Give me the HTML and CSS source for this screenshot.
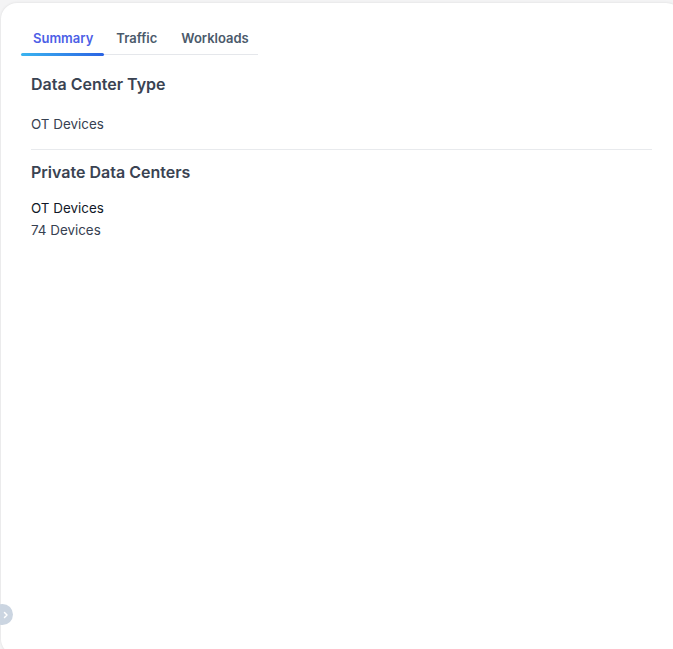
FILE: index.html
```html
<!DOCTYPE html>
<html lang="en">
<head>
<meta charset="utf-8">
<title>Summary</title>
<link rel="stylesheet" href="styles.css">
</head>
<body>
<div class="card">
  <nav class="tabs">
    <div class="tab active">Summary</div>
    <div class="tab">Traffic</div>
    <div class="tab">Workloads</div>
  </nav>
  <div class="content">
    <section class="section">
      <h2 class="title">Data Center Type</h2>
      <p class="value">OT Devices</p>
    </section>
    <hr class="divider">
    <section class="section">
      <h2 class="title">Private Data Centers</h2>
      <p class="label">OT Devices</p>
      <p class="value tight">74 Devices</p>
    </section>
  </div>
  <button class="expand" aria-label="Expand">
    <svg width="8" height="8" viewBox="0 0 8 8"><path d="M2.5 1.5 L5 4 L2.5 6.5" fill="none" stroke="#fff" stroke-width="1.5" stroke-linecap="round" stroke-linejoin="round"/></svg>
  </button>
</div>
</body>
</html>
```
FILE: styles.css
```css
html, body {
  margin: 0;
  padding: 0;
  overflow: hidden;
}
body {
  background: #f4f4f5;
  font-family: Inter, "Noto Sans", sans-serif;
  width: 673px;
  height: 649px;
}
.card {
  position: relative;
  box-sizing: border-box;
  margin: 3px 0 0 1px;
  width: 681px;
  height: 652px;
  background: #fff;
  border-radius: 16px;
  padding: 21px;
  box-shadow: 0 0 3px rgba(0, 0, 0, 0.10);
}
.tabs {
  display: flex;
  width: 236px;
  border-bottom: 1px solid #e5e7eb;
}
.tab {
  position: relative;
  padding: 6px 12px 8px;
  font-size: 13px;
  line-height: 16px;
  font-weight: 600;
  color: #4b5a6b;
}
.tab.active {
  color: #4d5fe6;
  padding: 6px 11px 8px;
}
.tab.active::after {
  content: "";
  position: absolute;
  left: -1px;
  right: 0;
  bottom: -2px;
  height: 3px;
  border-radius: 2px;
  background: linear-gradient(90deg, #3ab4f0, #2b63e3);
}
.content {
  margin: 0 9px;
}
.section {
  display: flex;
  flex-direction: column;
}
.title {
  margin: 19px 0 0;
  font-size: 16px;
  line-height: 20px;
  font-weight: 600;
  color: #3a4352;
}
.value {
  margin: 0;
  font-size: 13.4px;
  line-height: 22px;
  color: #374151;
}
.section:first-child .value {
  margin-top: 19px;
}
.label {
  margin: 15px 0 0;
  font-size: 13.4px;
  line-height: 22px;
  font-weight: 400;
  color: #111827;
}
.divider {
  margin: 14px 0 0;
  border: 0;
  border-top: 1px solid #e8eaed;
  height: 0;
}
.divider + .section .title {
  margin-top: 12px;
}
.expand {
  position: absolute;
  left: -9px;
  top: 601px;
  width: 21px;
  height: 21px;
  padding: 0;
  border: 0;
  border-radius: 50%;
  background: #cbd5e1;
  display: flex;
  align-items: center;
  justify-content: center;
  padding-left: 6px;
}
```
